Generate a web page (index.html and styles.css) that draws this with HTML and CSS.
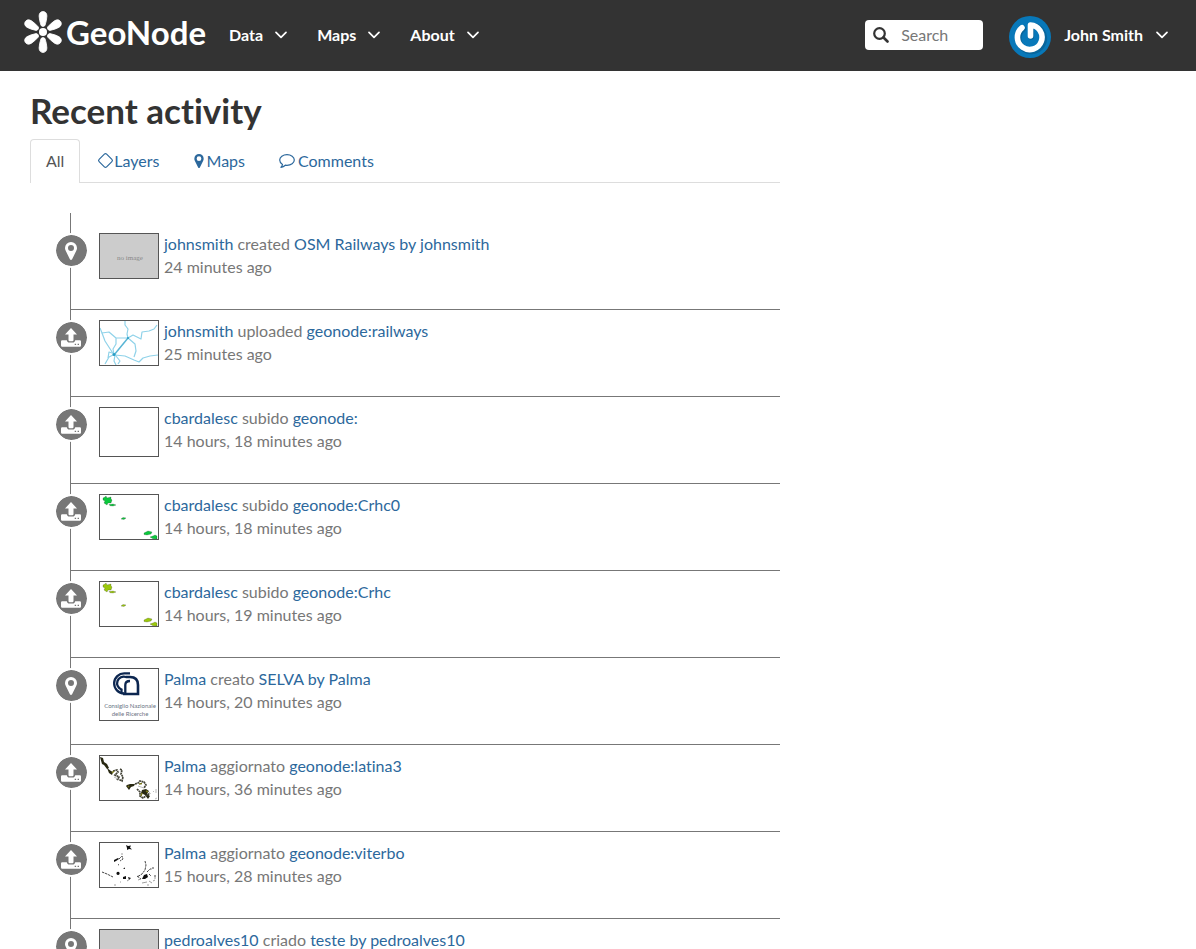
FILE: index.html
```html
<!DOCTYPE html>
<html lang="en">
<head>
<meta charset="utf-8">
<meta name="viewport" content="width=device-width, initial-scale=1">
<title>Recent activity - GeoNode</title>
<link rel="stylesheet" href="styles.css">
</head>
<body>
<svg class="sprite" aria-hidden="true">
  <symbol id="chevron" viewBox="0 0 12 8"><path d="M1 1.3l5 5 5-5" fill="none" stroke="currentColor" stroke-width="1.7" stroke-linecap="round" stroke-linejoin="round"/></symbol>
  <symbol id="pin" viewBox="0 0 12 18"><path fill="currentColor" fill-rule="evenodd" d="M6 0a6 6 0 0 1 6 6c0 1-.2 1.800-.6 2.600L7.100 17.200c-.5.9-1.700.9-2.200 0L.6 8.600C.2 7.800 0 7 0 6a6 6 0 0 1 6-6zm0 3a3 3 0 1 0 0 6 3 3 0 0 0 0-6z"/></symbol>
  <symbol id="upload" viewBox="0 0 20 19"><path fill="currentColor" fill-rule="evenodd" d="M10 0l6 6.500h-3.500V12q0 1.200-1.200 1.200H8.700Q7.500 13.200 7.500 12V6.500H4zM1.200 12.200h4.600c.3 1.500 1.300 2.300 2.500 2.300h3.400c1.200 0 2.200-.8 2.500-2.300h4.600q1.200 0 1.200 1.200v4.200q0 1.200-1.200 1.200H1.200Q0 18.800 0 17.600v-4.200q0-1.200 1.200-1.200zM13.700 15.700v1.400h1.400v-1.400zm2.900 0v1.400H18v-1.400z"/></symbol>
  <symbol id="islands" viewBox="0 0 58 44"><path fill="currentColor" stroke="#222" stroke-opacity=".45" stroke-width=".5" d="M3 3l2-1 1-1 1 2 4-1v2l1 1-1 3-3 0-1 2-3-2 1-2-2-1zM9 9.500l4-.5 3 1-3 1-3-.3zM21 24l2-1.500 3 .5-2 1.500zM44 38l4-2 4 1-1 2-4 1-3-.5zM50 42l3-1 2-1 2 1v3l-4-.2z"/></symbol>
</svg>

<header class="navbar">
  <a class="brand" href="#">
    <svg class="brand-mark" viewBox="0 0 38 42" aria-hidden="true">
      <g fill="#fff">
        <circle cx="19" cy="21" r="4"/>
        <path id="petal" d="M17 14.500Q15.200 9 15.100 5C15-1 23-1 22.900 5Q22.800 9 21 14.500Q19 16.500 17 14.500z" stroke="#fff" stroke-width=".8"/>
        <use href="#petal" transform="rotate(60 19 21)"/>
        <use href="#petal" transform="rotate(120 19 21)"/>
        <use href="#petal" transform="rotate(180 19 21)"/>
        <use href="#petal" transform="rotate(240 19 21)"/>
        <use href="#petal" transform="rotate(300 19 21)"/>
      </g>
    </svg>
    <span class="brand-name">GeoNode</span>
  </a>
  <nav class="menu">
    <button type="button" class="menu-item">Data <svg class="chevron"><use href="#chevron"/></svg></button>
    <button type="button" class="menu-item">Maps <svg class="chevron"><use href="#chevron"/></svg></button>
    <button type="button" class="menu-item">About <svg class="chevron"><use href="#chevron"/></svg></button>
  </nav>
  <form class="search">
    <svg class="search-icon" viewBox="0 0 16 16" aria-hidden="true"><circle cx="6.500" cy="6.500" r="5.300" fill="none" stroke="#333" stroke-width="2.200"/><path d="M10.500 10.500l4 4" stroke="#333" stroke-width="2.600" stroke-linecap="round"/></svg>
    <input class="search-input" type="text" placeholder="Search" aria-label="Search">
  </form>
  <button type="button" class="menu-item user">
    <svg class="avatar" viewBox="0 0 42 42" aria-hidden="true"><circle cx="21" cy="21" r="21" fill="#0878b9"/><path d="M13.500 11.800A12.800 12.800 0 1 0 21.500 8.800V20" fill="none" stroke="#084d78" stroke-opacity=".45" stroke-width="6" stroke-linecap="round" stroke-linejoin="round" transform="translate(.6 .8)"/><path d="M13 11.700A12.300 12.300 0 1 0 21.500 9V20" fill="none" stroke="#fff" stroke-width="5.600" stroke-linecap="round" stroke-linejoin="round"/></svg>
    <span class="user-name">John Smith</span> <svg class="chevron"><use href="#chevron"/></svg>
  </button>
</header>

<main class="page">
  <section class="activity">
    <h1>Recent activity</h1>
    <ul class="tabs">
      <li><a class="tab active" href="#all">All</a></li>
      <li><a class="tab" href="#layers"><svg class="tab-layers" viewBox="0 0 16 16" aria-hidden="true"><rect x="3" y="3" width="10" height="10" rx="1.500" transform="rotate(45 8 8)" fill="none" stroke="currentColor" stroke-width="1.100"/></svg>Layers</a></li>
      <li><a class="tab" href="#maps"><svg class="tab-pin" aria-hidden="true"><use href="#pin"/></svg>Maps</a></li>
      <li><a class="tab" href="#comments"><svg class="tab-comment" viewBox="0 0 16 14" aria-hidden="true"><path d="M8 .7c4 0 7.300 2.300 7.300 5.300S12 11.300 8 11.300q-.9 0-1.700-.1Q4.500 12.900 2 13.300q1.200-1.100 1.500-2.900C1.800 9.400.7 7.800.7 6 .7 3 4 .7 8 .7z" fill="none" stroke="currentColor" stroke-width="1.200" stroke-linejoin="round"/></svg>Comments</a></li>
    </ul>

    <ul class="feed">
      <li class="entry">
        <span class="badge"><svg class="badge-pin"><use href="#pin"/></svg></span>
        <svg class="thumb blank" viewBox="0 0 58 44"><text x="30" y="26" text-anchor="middle" class="no-image">no image</text></svg>
        <div class="text"><p><a href="#">johnsmith</a> created <a href="#">OSM Railways by johnsmith</a></p><p>24 minutes ago</p></div>
      </li>
      <li class="entry">
        <span class="badge"><svg class="badge-upload"><use href="#upload"/></svg></span>
        <svg class="thumb" viewBox="0 0 58 44"><g fill="none" stroke="#8fd2e9" stroke-width="1.200" stroke-linejoin="round"><path d="M0 7l2 5 7-1 7 6 12 0 5-3 8 4 1-7 7-1 5-2 3-4M25 0l0 4 3 4-1 5 1 4M16 17l0 6-3 5 1 6M28 17l7 6 1 7-2 6M15 34l10 1 9 4 5 2 4-4 7-2 8-1M13 34l-4 2-4 7M15 34l-1 6 2 4M12 32l-3-1-1 6M16 35l4 5-2 3"/><path d="M2 12l3 8 9 14" /></g><path d="M28 17L14 34" stroke="#58b5d5" stroke-width="1.500"/><circle cx="14" cy="33.500" r="1.500" fill="#279dc5"/><circle cx="28" cy="17" r="1" fill="#279dc5"/></svg>
        <div class="text"><p><a href="#">johnsmith</a> uploaded <a href="#">geonode:railways</a></p><p>25 minutes ago</p></div>
      </li>
      <li class="entry">
        <span class="badge"><svg class="badge-upload"><use href="#upload"/></svg></span>
        <svg class="thumb medium" viewBox="0 0 58 48"></svg>
        <div class="text"><p><a href="#">cbardalesc</a> subido <a href="#">geonode:</a></p><p>14 hours, 18 minutes ago</p></div>
      </li>
      <li class="entry">
        <span class="badge"><svg class="badge-upload"><use href="#upload"/></svg></span>
        <svg class="thumb green"><use href="#islands"/></svg>
        <div class="text"><p><a href="#">cbardalesc</a> subido <a href="#">geonode:Crhc0</a></p><p>14 hours, 18 minutes ago</p></div>
      </li>
      <li class="entry">
        <span class="badge"><svg class="badge-upload"><use href="#upload"/></svg></span>
        <svg class="thumb lime"><use href="#islands"/></svg>
        <div class="text"><p><a href="#">cbardalesc</a> subido <a href="#">geonode:Crhc</a></p><p>14 hours, 19 minutes ago</p></div>
      </li>
      <li class="entry">
        <span class="badge"><svg class="badge-pin"><use href="#pin"/></svg></span>
        <svg class="thumb tall" viewBox="0 0 58 51"><g fill="none" stroke="#0c2650" stroke-width="2.300"><path d="M30 4.300h-5.500A9.300 9.300 0 0 0 24 24.500"/><path d="M30 8h-4a6.500 6.500 0 0 0-4.500 12.500V24"/><path d="M25.300 24V16q0-4 4.700-4"/><path d="M30 8q8 0 8 8v9h-15" stroke-width="2.600"/></g><text x="30" y="39" text-anchor="middle" class="cnr">Consiglio Nazionale</text><text x="30" y="47" text-anchor="middle" class="cnr">delle Ricerche</text></svg>
        <div class="text"><p><a href="#">Palma</a> creato <a href="#">SELVA by Palma</a></p><p>14 hours, 20 minutes ago</p></div>
      </li>
      <li class="entry">
        <span class="badge"><svg class="badge-upload"><use href="#upload"/></svg></span>
        <svg class="thumb" viewBox="0 0 58 44"><path d="M0 1l3 1 1 4 3 2 2 4-2 1-3-4-2-1zM7 12l4 3 2 1-1 3-3-2zM27 29l3-1 5 0-1 2-3 1-2 3-3-4zM42 34l4-1 3 2-2 3 3 2-2 3-3-4-4-2z" fill="#282812"/><path d="M13 15l4-1 1 2-3 3 4 2-2 3M20 13l2 1-1 4 2 3-1 4-4-2M35 28l3-1 2-2 4 1 2 3-2 3M37 33l3 3 0 4 3 2 3-2 4-3" fill="none" stroke="#444438" stroke-width="1.700" stroke-dasharray="2 .5"/><path d="M12 17l2-2M28 31l1-1M41 40l1-3M46 35l2 1M39 28l3-.5" stroke="#77751a" stroke-width="1.500"/><path d="M38 30l6 2M14 21l6 3M53 36l1-1M56 33v4M55 43l2-1" stroke="#aaa" stroke-width=".8"/></svg>
        <div class="text"><p><a href="#">Palma</a> aggiornato <a href="#">geonode:latina3</a></p><p>14 hours, 36 minutes ago</p></div>
      </li>
      <li class="entry">
        <span class="badge"><svg class="badge-upload"><use href="#upload"/></svg></span>
        <svg class="thumb" viewBox="0 0 58 44"><path d="M26 2l2 1 3-.5-1 2 2 2-3-.5-2 1v-2zM14 17l4-2 1 1-3 2-2 1zM18 32a1.600 1.600 0 1 1 .1 0zM23 34l3-1 0 3-3 0zM28 34l3 1-2 2zM23 25.500l2-1v1.500zM44 32l3-1 1 3-3 2-3 0z" fill="#111"/><path d="M19 16l3-3 1 3-3 2M18 22l1-.5M2 29l5 2 6 3M45 18l1 4-1 5-3 4-5 3M47 29l3-3 2 0M37 33l4 3M49 31l2 2M52 25h2M55 32v2" fill="none" stroke="#444" stroke-width="1" stroke-dasharray="2.500 .8"/><path d="M38 37l3-1M42 40l5-1M49 38l3 2M53 38l2-1M14 42h2M20 39h1M27 38l3-2M22 12v-2M55 36v-2M47 42h2" stroke="#888" stroke-width=".8"/></svg>
        <div class="text"><p><a href="#">Palma</a> aggiornato <a href="#">geonode:viterbo</a></p><p>15 hours, 28 minutes ago</p></div>
      </li>
      <li class="entry">
        <span class="badge"><svg class="badge-pin"><use href="#pin"/></svg></span>
        <svg class="thumb blank" viewBox="0 0 58 44"></svg>
        <div class="text"><p><a href="#">pedroalves10</a> criado <a href="#">teste by pedroalves10</a></p></div>
      </li>
    </ul>
  </section>
</main>
</body>
</html>
```

FILE: styles.css
```css
* {
  box-sizing: border-box;
}

body {
  margin: 0;
  background: #fff;
  color: #777;
  font: 16px/23px Lato, "Open Sans", sans-serif;
  font-variant-ligatures: none;
}

a {
  color: #2c689c;
  text-decoration: none;
}

ul, p {
  margin: 0;
  padding: 0;
  list-style: none;
}

button, input {
  font: inherit;
}

.sprite {
  position: absolute;
  width: 0;
  height: 0;
}

/* Top bar */
.navbar {
  display: flex;
  align-items: center;
  height: 71px;
  padding: 0 28px 2px 24px;
  background: #333;
}

.brand {
  display: flex;
  align-items: center;
  gap: 4px;
  padding-bottom: 6px;
  color: #fff;
}

.brand-mark {
  width: 38px;
  height: 42px;
}

.brand-name {
  font: 700 33px/42px Lato, "Open Sans", sans-serif;
}

.menu {
  display: flex;
  gap: 30px;
  margin-left: 23px;
}

.menu-item {
  display: flex;
  align-items: center;
  gap: 12px;
  padding: 0;
  border: 0;
  background: none;
  color: #fff;
  font-weight: 700;
}

.chevron {
  width: 12px;
  height: 8px;
}

.search {
  display: flex;
  align-items: center;
  gap: 12px;
  width: 118px;
  height: 30px;
  margin-left: auto;
  padding: 0 8px;
  border-radius: 4px;
  background: #fff;
}

.search-icon {
  flex: none;
  width: 16px;
  height: 16px;
}

.search-input {
  min-width: 0;
  width: 100%;
  padding: 0;
  border: 0;
  outline: 0;
  background: none;
  color: #333;
}

.search-input::placeholder {
  color: #777;
}

.user {
  margin-left: 26px;
  gap: 13px;
}

.avatar {
  width: 42px;
  height: 42px;
  margin-top: 4px;
}

/* Content */
.page {
  display: grid;
  grid-template-columns: 2fr 1fr;
  max-width: 1200px;
  padding: 0 11px 0 15px;
}

.activity {
  padding: 20px 15px 0;
}

h1 {
  margin: 0 0 10px;
  color: #333;
  font-size: 35px;
  font-weight: 700;
  line-height: 38px;
}

.tabs {
  display: flex;
  gap: 2px;
  height: 44px;
  border-bottom: 1px solid #ddd;
}

.tab {
  display: flex;
  align-items: center;
  height: 44px;
  padding: 0 15px 2px;
  border: 1px solid transparent;
  border-bottom: 0;
  border-radius: 4px 4px 0 0;
}

.tab.active {
  border-color: #ddd;
  background: #fff;
  color: #555;
}

.tab-layers {
  width: 17px;
  height: 17px;
  margin-left: -1px;
}

.tab-pin {
  width: 10px;
  height: 14px;
  margin-right: 3px;
}

.tab-comment {
  width: 16px;
  height: 14px;
  margin-right: 3px;
}

/* Timeline */
.feed {
  margin: 30px 0 0 40px;
}

.entry {
  display: flex;
  align-items: flex-start;
  min-height: 87px;
  padding-top: 10px;
  border-left: 1px solid #777;
  border-bottom: 1px solid #777;
}

.entry:first-child {
  padding-top: 20px;
  min-height: 97px;
}

.badge {
  display: flex;
  flex: none;
  align-items: center;
  justify-content: center;
  width: 35px;
  height: 35px;
  margin: 0 10px 0 -17px;
  padding-right: 1px;
  border: 2px solid #fff;
  border-radius: 50%;
  background: #777 padding-box;
  color: #fff;
}

.badge-pin {
  width: 12px;
  height: 18px;
}

.badge-upload {
  width: 20px;
  height: 19px;
}

.thumb {
  flex: none;
  width: 60px;
  height: 46px;
  margin-right: 5px;
  border: 1px solid #555;
}

.thumb.medium {
  height: 50px;
}

.thumb.tall {
  height: 53px;
}

.thumb.blank {
  background: #ccc;
}

.thumb.green {
  color: #0bc83c;
}

.thumb.lime {
  color: #9bc90b;
}

.text {
  margin-top: -1px;
}

.no-image {
  fill: #888;
  font: 7px "Liberation Serif", serif;
}

.cnr {
  fill: #6b7484;
  font: 6px Lato, sans-serif;
}
```
